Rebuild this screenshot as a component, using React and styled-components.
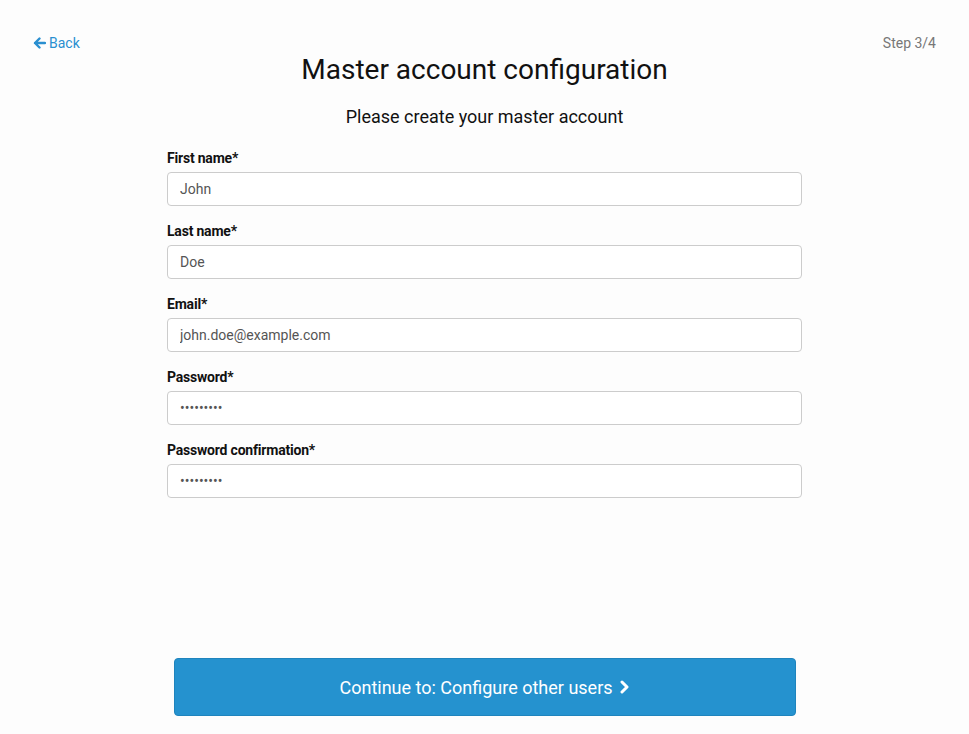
import React from 'react'
import styled, { createGlobalStyle } from 'styled-components'

const GlobalStyle = createGlobalStyle`
  html, body {
    margin: 0;
    padding: 0;
    background: #fdfdfd;
    font-family: Roboto, "Liberation Sans", Arial, sans-serif;
    color: #111;
  }
`

const Page = styled.div`
  min-height: 100vh;
  box-sizing: border-box;
  display: flex;
  flex-direction: column;
  padding: 33px 33px 18px;
`

const TopBar = styled.div`
  display: flex;
  justify-content: space-between;
  align-items: center;
  font-size: 14px;
  line-height: 20px;
`

const BackLink = styled.a`
  display: inline-flex;
  align-items: center;
  gap: 3px;
  color: #2a8fd0;
  text-decoration: none;
  cursor: pointer;
`

const Step = styled.span`
  color: #777;
`

const Title = styled.h1`
  margin: 0;
  text-align: center;
  font-size: 28px;
  font-weight: 400;
  line-height: 34px;
`

const Subtitle = styled.p`
  margin: 18px 0 0;
  text-align: center;
  font-size: 18px;
  line-height: 24px;
`

const Form = styled.form`
  width: 635px;
  margin: 19px auto 0;
  display: flex;
  flex-direction: column;
  gap: 15px;
`

const Field = styled.div`
  display: flex;
  flex-direction: column;
  gap: 4px;
`

const Label = styled.label`
  font-size: 14px;
  line-height: 20px;
  font-weight: 700;
  color: #111;
  letter-spacing: -0.2px;
`

const Input = styled.input`
  box-sizing: border-box;
  height: 34px;
  padding: 0 12px;
  border: 1px solid #ccc;
  border-radius: 4px;
  font-family: inherit;
  font-size: 14px;
  color: #555;
  background: #fff;
  outline: none;
`

const Footer = styled.div`
  margin-top: auto;
  display: flex;
  justify-content: center;
`

const ContinueButton = styled.button`
  width: 622px;
  height: 58px;
  display: inline-flex;
  align-items: center;
  justify-content: center;
  gap: 6px;
  background: #2592cf;
  border: 1px solid #1f84bd;
  border-radius: 4px;
  color: #fff;
  font-family: inherit;
  font-size: 18px;
  cursor: pointer;
`

const ArrowLeft = () => (
  <svg width="13" height="12" viewBox="0 0 13 12" fill="none" stroke="currentColor" strokeWidth="2.4" strokeLinecap="round" strokeLinejoin="round">
    <path d="M6.5 1.5L2 6l4.5 4.5M2 6h10" />
  </svg>
)

const Chevron = () => (
  <svg width="11" height="14" viewBox="0 0 11 14" fill="none" stroke="currentColor" strokeWidth="3" strokeLinecap="round" strokeLinejoin="round">
    <path d="M3 2l5 5-5 5" />
  </svg>
)

const fields = [
  { label: 'First name*', type: 'text', value: 'John' },
  { label: 'Last name*', type: 'text', value: 'Doe' },
  { label: 'Email*', type: 'email', value: 'john.doe@example.com' },
  { label: 'Password*', type: 'password', value: 'secret123' },
  { label: 'Password confirmation*', type: 'password', value: 'secret123' },
]

export default function App() {
  return (
    <>
      <GlobalStyle />
      <Page>
        <TopBar>
          <BackLink>
            <ArrowLeft />
            Back
          </BackLink>
          <Step>Step 3/4</Step>
        </TopBar>
        <Title>Master account configuration</Title>
        <Subtitle>Please create your master account</Subtitle>
        <Form onSubmit={(e) => e.preventDefault()}>
          {fields.map(({ label, type, value }) => (
            <Field key={label}>
              <Label>{label}</Label>
              <Input type={type} defaultValue={value} />
            </Field>
          ))}
        </Form>
        <Footer>
          <ContinueButton type="button">
            Continue to: Configure other users
            <Chevron />
          </ContinueButton>
        </Footer>
      </Page>
    </>
  )
}
